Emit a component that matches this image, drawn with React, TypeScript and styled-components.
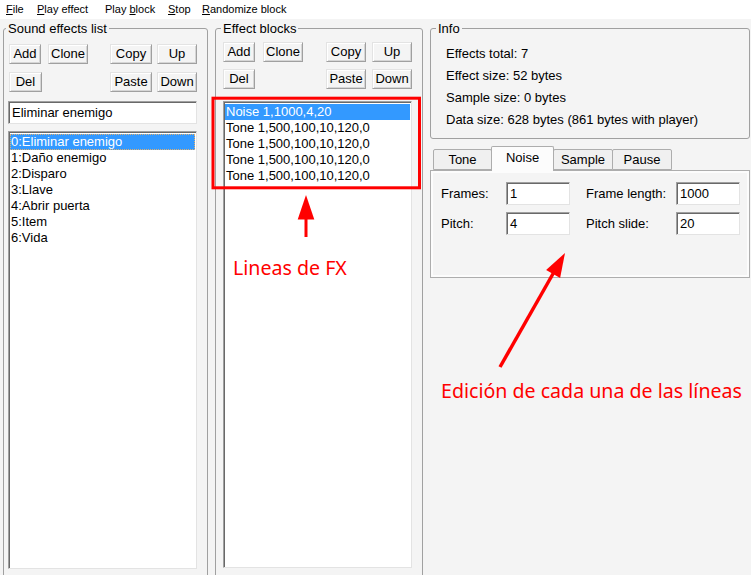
import React from 'react';
import styled, { createGlobalStyle } from 'styled-components';

const Global = createGlobalStyle`
  html, body { margin: 0; padding: 0; background: #f4f4f4; }
  body {
    font-family: "Liberation Sans", Arial, sans-serif;
    font-size: 13px;
    color: #000;
  }
`;

const Window = styled.div`
  position: relative;
  width: 751px;
  height: 575px;
  overflow: hidden;
  background: #f4f4f4;
  display: flex;
  flex-direction: column;
`;

const MenuBar = styled.div`
  height: 19px;
  background: #fff;
  display: flex;
  align-items: center;
  padding-left: 6px;
  font-size: 11px;
  line-height: 19px;
  flex-shrink: 0;
`;

const MenuItem = styled.span<{ $w?: number }>`
  display: inline-block;
  width: ${p => (p.$w ? `${p.$w}px` : 'auto')};
  white-space: nowrap;
  u { text-decoration: underline; text-underline-offset: 1px; }
`;

const Main = styled.div`
  display: flex;
  align-items: flex-start;
  padding: 2px 0 0 3px;
`;

const Group = styled.fieldset<{ $w: number; $h: number; $ml?: number }>`
  box-sizing: border-box;
  width: ${p => p.$w}px;
  height: ${p => p.$h}px;
  margin: 0 0 0 ${p => p.$ml ?? 0}px;
  padding: 0;
  border: 1px solid #a0a0a0;
  border-radius: 3px;
  min-width: 0;
  flex-shrink: 0;
`;

const Legend = styled.legend<{ $offset: number }>`
  margin-left: ${p => p.$offset}px;
  padding: 0 2px;
  font-size: 13px;
  line-height: 15px;
`;

const GroupBody = styled.div<{ $pt: number; $pl: number }>`
  display: flex;
  flex-direction: column;
  padding: ${p => p.$pt}px 0 0 ${p => p.$pl}px;
`;

const ButtonRows = styled.div<{ $w: number; $ml: number; $gap: number }>`
  width: ${p => p.$w}px;
  margin-left: ${p => p.$ml}px;
  display: flex;
  flex-direction: column;
  gap: ${p => p.$gap}px;
`;

const ButtonRow = styled.div`
  display: flex;
  justify-content: space-between;
`;

const ButtonCluster = styled.div<{ $gap: number }>`
  display: flex;
  gap: ${p => p.$gap}px;
`;

const Button = styled.button<{ $w: number }>`
  box-sizing: border-box;
  width: ${p => p.$w}px;
  height: 20px;
  padding: 0;
  margin: 0;
  font-family: inherit;
  font-size: 13px;
  line-height: 16px;
  color: #000;
  background: #f4f4f4;
  border: 1px solid;
  border-color: #e3e3e3 #a0a0a0 #a0a0a0 #e3e3e3;
  box-shadow: inset 1px 1px 0 #ffffff, inset -1px -1px 0 #d6d6d6;
`;

const sunken = `
  box-sizing: border-box;
  border: 1px solid;
  border-color: #a0a0a0 #e3e3e3 #e3e3e3 #a0a0a0;
  box-shadow: inset 1px 1px 0 #696969, inset -1px -1px 0 #ffffff;
  background: #fff;
`;

const TextInput = styled.div<{ $w: number; $mt?: number }>`
  ${sunken}
  width: ${p => p.$w}px;
  height: 23px;
  margin-top: ${p => p.$mt ?? 0}px;
  padding: 0 0 0 3px;
  font-size: 13px;
  line-height: 22px;
  white-space: nowrap;
`;

const ListBox = styled.div<{ $w: number; $h: number; $mt: number }>`
  ${sunken}
  width: ${p => p.$w}px;
  height: ${p => p.$h}px;
  margin-top: ${p => p.$mt}px;
  padding: 2px 1px 1px 1px;
  display: flex;
  flex-direction: column;
`;

const ListItem = styled.div<{ $selected?: boolean; $focus?: boolean }>`
  height: 16px;
  line-height: 16px;
  padding-left: 1px;
  font-size: 13px;
  white-space: nowrap;
  color: ${p => (p.$selected ? '#fff' : '#000')};
  background: ${p => (p.$selected ? '#3399ff' : 'transparent')};
  outline: ${p => (p.$focus ? '1px dotted #e0b070' : 'none')};
  outline-offset: -1px;
`;

const RightColumn = styled.div`
  display: flex;
  flex-direction: column;
  margin-left: 7px;
`;

const InfoLines = styled.div`
  display: flex;
  flex-direction: column;
  padding: 7px 0 0 15px;
`;

const InfoLine = styled.div`
  height: 22px;
  line-height: 22px;
  font-size: 13px;
`;

const Tabs = styled.div`
  display: flex;
  flex-direction: column;
  margin-top: 7px;
`;

const TabStrip = styled.div`
  display: flex;
  align-items: flex-end;
  height: 24px;
  padding-left: 3px;
  position: relative;
  z-index: 1;
`;

const Tab = styled.div<{ $w: number; $active?: boolean }>`
  box-sizing: border-box;
  width: ${p => p.$w}px;
  height: ${p => (p.$active ? 25 : 21)}px;
  margin-bottom: ${p => (p.$active ? -1 : 0)}px;
  margin-left: -1px;
  &:first-child { margin-left: 0; }
  border: 1px solid #adadad;
  border-bottom: ${p => (p.$active ? 'none' : '1px solid #adadad')};
  border-radius: 2px 2px 0 0;
  background: ${p => (p.$active ? '#fcfcfc' : '#f0f0f0')};
  display: flex;
  justify-content: center;
  padding-top: ${p => (p.$active ? 2 : 1)}px;
  font-size: 13px;
  line-height: 17px;
  position: relative;
  z-index: ${p => (p.$active ? 2 : 1)};
`;

const TabPanel = styled.div`
  box-sizing: border-box;
  width: 320px;
  height: 108px;
  border: 1px solid #adadad;
  background: #f4f4f4;
  box-shadow: inset 0 0 0 2px #fcfcfc;
  padding: 11px 0 0 10px;
`;

const FieldGrid = styled.div`
  display: grid;
  grid-template-columns: 65px 80px 90px 64px;
  grid-auto-rows: 23px;
  row-gap: 7px;
  align-items: center;
`;

const FieldLabel = styled.span`
  font-size: 13px;
  white-space: nowrap;
`;

const Overlay = styled.div`
  position: absolute;
  inset: 0;
  pointer-events: none;
`;

const OverlaySvg = styled.svg`
  position: absolute;
  left: 0;
  top: 0;
`;

const Note = styled.div<{ $x: number; $y: number }>`
  position: absolute;
  left: ${p => p.$x}px;
  top: ${p => p.$y}px;
  font-family: "Noto Sans", "Open Sans", sans-serif;
  font-size: 19.6px;
  line-height: 20px;
  color: #ff0000;
  white-space: nowrap;
`;

const effects = [
  '0:Eliminar enemigo',
  '1:Daño enemigo',
  '2:Disparo',
  '3:Llave',
  '4:Abrir puerta',
  '5:Item',
  '6:Vida',
];

const blocks = [
  'Noise 1,1000,4,20',
  'Tone 1,500,100,10,120,0',
  'Tone 1,500,100,10,120,0',
  'Tone 1,500,100,10,120,0',
  'Tone 1,500,100,10,120,0',
];

export default function App() {
  return (
    <Window>
      <Global />
      <MenuBar>
        <MenuItem $w={31}><u>F</u>ile</MenuItem>
        <MenuItem $w={68}><u>P</u>lay effect</MenuItem>
        <MenuItem $w={63}>Play <u>b</u>lock</MenuItem>
        <MenuItem $w={34}><u>S</u>top</MenuItem>
        <MenuItem><u>R</u>andomize block</MenuItem>
      </MenuBar>
      <Main>
        <Group $w={205} $h={580}>
          <Legend $offset={2}>Sound effects list</Legend>
          <GroupBody $pt={8} $pl={4}>
            <ButtonRows $w={188} $ml={1} $gap={8}>
              <ButtonRow>
                <ButtonCluster $gap={7}>
                  <Button $w={32}>Add</Button>
                  <Button $w={40}>Clone</Button>
                </ButtonCluster>
                <ButtonCluster $gap={5}>
                  <Button $w={42}>Copy</Button>
                  <Button $w={40}>Up</Button>
                </ButtonCluster>
              </ButtonRow>
              <ButtonRow>
                <Button $w={33}>Del</Button>
                <ButtonCluster $gap={5}>
                  <Button $w={42}>Paste</Button>
                  <Button $w={40}>Down</Button>
                </ButtonCluster>
              </ButtonRow>
            </ButtonRows>
            <TextInput $w={189} $mt={9}>Eliminar enemigo</TextInput>
            <ListBox $w={189} $h={438} $mt={7}>
              {effects.map((e, i) => (
                <ListItem key={e} $selected={i === 0} $focus={i === 0}>{e}</ListItem>
              ))}
            </ListBox>
          </GroupBody>
        </Group>
        <Group $w={208} $h={580} $ml={7}>
          <Legend $offset={5}>Effect blocks</Legend>
          <GroupBody $pt={6} $pl={7}>
            <ButtonRows $w={189} $ml={0} $gap={7}>
              <ButtonRow>
                <ButtonCluster $gap={8}>
                  <Button $w={32}>Add</Button>
                  <Button $w={40}>Clone</Button>
                </ButtonCluster>
                <ButtonCluster $gap={6}>
                  <Button $w={40}>Copy</Button>
                  <Button $w={40}>Up</Button>
                </ButtonCluster>
              </ButtonRow>
              <ButtonRow>
                <Button $w={32}>Del</Button>
                <ButtonCluster $gap={6}>
                  <Button $w={40}>Paste</Button>
                  <Button $w={40}>Down</Button>
                </ButtonCluster>
              </ButtonRow>
            </ButtonRows>
            <ListBox $w={189} $h={467} $mt={12}>
              {blocks.map((b, i) => (
                <ListItem key={i} $selected={i === 0}>{b}</ListItem>
              ))}
            </ListBox>
          </GroupBody>
        </Group>
        <RightColumn>
          <Group $w={320} $h={118}>
            <Legend $offset={5}>Info</Legend>
            <InfoLines>
              <InfoLine>Effects total: 7</InfoLine>
              <InfoLine>Effect size: 52 bytes</InfoLine>
              <InfoLine>Sample size: 0 bytes</InfoLine>
              <InfoLine>Data size: 628 bytes (861 bytes with player)</InfoLine>
            </InfoLines>
          </Group>
          <Tabs>
            <TabStrip>
              <Tab $w={59}>Tone</Tab>
              <Tab $w={63} $active>Noise</Tab>
              <Tab $w={60}>Sample</Tab>
              <Tab $w={60}>Pause</Tab>
            </TabStrip>
            <TabPanel>
              <FieldGrid>
                <FieldLabel>Frames:</FieldLabel>
                <TextInput $w={64}>1</TextInput>
                <FieldLabel>Frame length:</FieldLabel>
                <TextInput $w={64}>1000</TextInput>
                <FieldLabel>Pitch:</FieldLabel>
                <TextInput $w={64}>4</TextInput>
                <FieldLabel>Pitch slide:</FieldLabel>
                <TextInput $w={64}>20</TextInput>
              </FieldGrid>
            </TabPanel>
          </Tabs>
        </RightColumn>
      </Main>
      <Overlay>
        <OverlaySvg width="751" height="575" viewBox="0 0 751 575">
          <rect x="213" y="98.2" width="206.5" height="89.6" fill="none" stroke="#ff0000" strokeWidth="3" />
          <polygon points="306,195 297.7,219.5 314.3,219.5" fill="#ff0000" />
          <line x1="306" y1="218" x2="306" y2="237" stroke="#ff0000" strokeWidth="3" />
          <polygon points="565,253 546.1,269.9 560.1,277.9" fill="#ff0000" />
          <line x1="554" y1="272" x2="500" y2="367" stroke="#ff0000" strokeWidth="3.5" />
        </OverlaySvg>
        <Note $x={233} $y={258}>Lineas de FX</Note>
        <Note $x={441} $y={381}>Edición de cada una de las líneas</Note>
      </Overlay>
    </Window>
  );
}
